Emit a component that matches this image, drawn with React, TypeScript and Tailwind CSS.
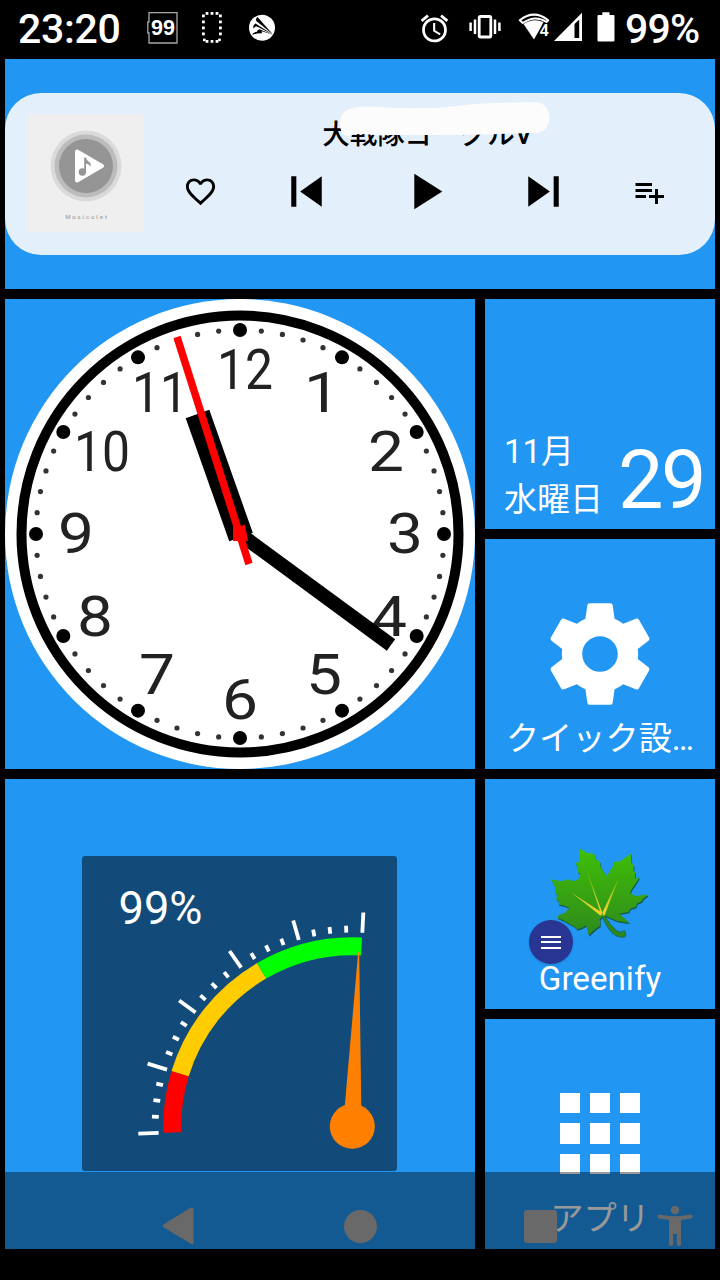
import type { ReactNode } from "react";
import {
  MdAlarm,
  MdFavoriteBorder,
  MdPlayArrow,
  MdPlaylistAdd,
  MdSkipNext,
  MdSkipPrevious,
} from "react-icons/md";

type Numeral = {
  label: string;
  x: number;
  y: number;
};

const numerals: Numeral[] = [
  { label: "12", x: 240, y: 90 },
  { label: "1", x: 317, y: 113 },
  { label: "2", x: 381, y: 172 },
  { label: "3", x: 400, y: 254 },
  { label: "4", x: 384, y: 337 },
  { label: "5", x: 319, y: 395 },
  { label: "6", x: 235, y: 420 },
  { label: "7", x: 152, y: 395 },
  { label: "8", x: 90, y: 337 },
  { label: "9", x: 71, y: 254 },
  { label: "10", x: 97, y: 172 },
  { label: "11", x: 155, y: 113 },
];

// point on a circle, angle in degrees, 0 = right, counter-clockwise
function polar(cx: number, cy: number, r: number, deg: number) {
  const a = (deg * Math.PI) / 180;
  return { x: cx + r * Math.cos(a), y: cy - r * Math.sin(a) };
}

function StatusBar() {
  return (
    <header className="flex h-[59px] items-center pb-[3px] pl-[18px] text-white">
      <span className="w-[106px] pt-[3px] text-[41px] font-medium leading-none tracking-[-0.3px]">23:20</span>

      {/* Notification icons */}
      <svg className="ml-[23px] h-8 w-8" viewBox="0 0 32 32">
        <path d="M2 0.5H30V31H2V21H.8V10H2Z" fill="none" stroke="#a8a8a8" strokeWidth="1.3" />
        <text x="16" y="23" textAnchor="middle" fontSize="21.500" fontWeight="700" fill="#fff" fontFamily="Liberation Sans, sans-serif">
          99
        </text>
      </svg>
      <svg className="ml-[23px] h-8 w-5" viewBox="0 0 20 32">
        <g fill="#fff">
          {[5, 10, 15].map((x) => (
            <g key={x}>
              <rect x={x - 1.4} y="0" width="2.8" height="2.8" />
              <rect x={x - 1.4} y="28" width="2.8" height="2.8" />
            </g>
          ))}
          {[3.5, 9.5, 15.5, 21.5].map((y) => (
            <g key={y}>
              <rect x="0" y={y - 1} width="2.8" height="2.8" />
              <rect x="17" y={y - 1} width="2.8" height="2.8" />
            </g>
          ))}
          <rect x="1" y="26.6" width="2.6" height="2.6" />
          <rect x="16.2" y="26.6" width="2.6" height="2.6" />
        </g>
      </svg>
      <svg className="ml-[26px] h-8 w-7" viewBox="0 0 28 32">
        <circle cx="14" cy="15.8" r="13" fill="#fff" />
        <path d="M25 22.5L9.500 5Q7.300 6.500 8 8.800Z" fill="#000" />
        <path d="M25 22.8L7.500 11.500Q4.500 13 5.500 16.500Q7 14 9.500 14.800Z" fill="#000" />
        <path d="M24.500 22.800L11.500 17.200Q9 18 9 19.800Q5 20 4 23Q9 20.800 14.500 21.200Q13 20 14 19.200Z" fill="#000" />
      </svg>

      {/* System icons */}
      <MdAlarm className="ml-[142px] size-[33px]" />
      <svg className="ml-[18px] h-8 w-8" viewBox="0 0 32 32">
        <rect x="10.2" y="4.5" width="11.6" height="20.5" rx="1.2" fill="none" stroke="#fff" strokeWidth="2.8" />
        <path d="M6 7.5V22M1.6 10.5V19M26 7.5V22M30.4 10.5V19" stroke="#fff" strokeWidth="2.5" />
      </svg>
      <svg className="ml-[17px] h-8 w-[33px]" viewBox="0 0 33 32">
        <path d="M4.800 11L1.800 8.200Q16 -3 30.200 8.200L28.500 10Q17 2.500 4.800 11Z" fill="none" stroke="#fff" strokeWidth="2" strokeLinejoin="round" />
        <path d="M5.500 12Q15 5.500 25.500 10L23 15L16 27.500Z" fill="#fff" />
        <text x="21.500" y="23.600" fontSize="16.500" fontWeight="600" fill="#fff" stroke="#000" strokeWidth="2" paintOrder="stroke">
          4
        </text>
      </svg>
      <svg className="ml-[3px] h-8 w-7" viewBox="0 0 28 32">
        <path d="M0 29L28 .8V29Z" fill="#fff" />
        <path d="M20.500 12L25.200 7.500V26H20.500Z" fill="#000" />
      </svg>
      <svg className="ml-[15px] h-8 w-[18px]" viewBox="0 0 18 32">
        <path d="M5.3 .3H12.5V3H16.5Q17.5 3 17.5 4V28.3Q17.5 29.5 16.3 29.5H1.6Q.5 29.5 .5 28.3V4Q.5 3 1.5 3H5.3Z" fill="#fff" />
      </svg>
      <span className="ml-[10px] pt-[3px] text-[41px] font-medium leading-none tracking-[-0.8px]">99%</span>
    </header>
  );
}

function Tile({ children, className = "" }: { children: ReactNode; className?: string }) {
  return <section className={`overflow-hidden bg-[#2196f3] ${className}`}>{children}</section>;
}

function AlbumArt() {
  return (
    <div className="flex h-[118px] w-[116px] flex-col items-center bg-[#efefef] pt-4">
      <svg className="size-[72px]" viewBox="0 0 72 72">
        <circle cx="36" cy="36" r="35.5" fill="#dadada" />
        <circle cx="36" cy="36" r="31.5" fill="#bcbcbc" />
        <circle cx="36" cy="36" r="27" fill="#959595" />
        <path d="M27 21.5L52 36L27 50.5Z" fill="#fff" stroke="#fff" strokeWidth="4" strokeLinejoin="round" />
        <circle cx="32.4" cy="42" r="3.7" fill="#959595" />
        <path d="M34.2 42V27.5H36Q36.5 31 39.5 32.2Q41.5 33.4 40.3 36.6Q38.5 33.8 36 33.6V42Z" fill="#959595" />
      </svg>
      <p className="mt-[12px] pl-[2px] text-[6px] font-medium leading-none tracking-[1.9px] text-[#a4a4a4]">Musicolet</p>
    </div>
  );
}

function MusicWidget() {
  return (
    <Tile className="h-[230px] pt-[34px]">
      <div className="flex h-[162px] items-start rounded-[36px] bg-[#e3f0fb] pl-[23px] pt-[21px] text-black">
        <AlbumArt />
        <div className="ml-[39px] w-[486px]">
          <div className="relative h-[47px]">
            <p className="pl-[3px] pt-[3px] text-center text-[27.5px] font-medium leading-9">大戦隊ゴーグルV</p>
            <svg className="absolute -top-[14px] left-[155px] h-[38px] w-[214px]" viewBox="0 0 214 38">
              <path
                d="M2 23C2 12 9 9 20 7C44 6 55 9 80 8C110 9 130 3 160 3L197 2C216 3 216 31 199 33C172 33 153 35 125 35H50C38 37 22 31 12 36C5 37 2 31 2 23Z"
                fill="#fcfcfc"
              />
            </svg>
          </div>
          <div className="flex items-center gap-[57.5px]">
            <MdFavoriteBorder className="size-[35px] shrink-0" />
            <MdSkipPrevious className="size-[61px] shrink-0" />
            <MdPlayArrow className="size-[61px] shrink-0" />
            <MdSkipNext className="size-[61px] shrink-0" />
            <MdPlaylistAdd className="size-9 shrink-0" />
          </div>
        </div>
      </div>
    </Tile>
  );
}

function ClockWidget() {
  const dots = Array.from({ length: 60 }, (_, i) => i);
  return (
    <Tile className="size-[470px]">
      <svg className="size-full blur-[0.7px]" viewBox="0 0 470 470">
        <circle cx="235" cy="235" r="235" fill="#fff" />
        <circle cx="235" cy="235" r="218.5" fill="none" stroke="#000" strokeWidth="10" />
        {dots.map((i) => {
          const p = polar(235, 235, 204, i * 6);
          return <circle key={i} cx={p.x} cy={p.y} r={i % 5 === 0 ? 7 : 2.6} fill={i % 5 === 0 ? "#000" : "#333"} />;
        })}
        {numerals.map((n) => (
          <text
            key={n.label}
            x={n.x}
            y={n.y}
            textAnchor="middle"
            fontSize="55"
            fill="#222"
            textLength={n.label.length === 1 ? 36 : 56}
            lengthAdjust="spacingAndGlyphs"
          >
            {n.label}
          </text>
        ))}
        <path d="M236 238L192.500 115" stroke="#000" strokeWidth="25" />
        <path d="M235 235L386 346" stroke="#000" strokeWidth="14" />
        <path d="M172 38L244 265" stroke="#f00" strokeWidth="7.500" />
        <path d="M228 228L240 226L243 242H228Z" fill="#f00" />
      </svg>
    </Tile>
  );
}

function DateTile() {
  return (
    <Tile className="flex h-[230px] items-end justify-between pb-[5px] pl-[19px] pr-[11px] text-white">
      <div className="text-[33px] leading-[48px]">
        <p>11月</p>
        <p>水曜日</p>
      </div>
      <p className="pb-[4px] text-[81px] leading-[78px] tracking-[-2.5px]">29</p>
    </Tile>
  );
}

function AppTile({ label, children }: { label: string; children: ReactNode }) {
  return (
    <Tile className="relative flex h-[230px] flex-col items-center justify-end pb-[6px] text-white">
      {children}
      <p className="text-[33.2px] leading-[48px]">{label}</p>
    </Tile>
  );
}

function GearIcon() {
  return (
    <svg className="size-[122px]" viewBox="0 0 24 24" fill="currentColor">
      <path d="M19.43 12.98c.04-.32.07-.64.07-.98s-.03-.66-.07-.98l2.11-1.65c.19-.15.24-.42.12-.64l-2-3.46c-.12-.22-.39-.3-.61-.22l-2.49 1c-.52-.4-1.08-.73-1.69-.98l-.38-2.65C14.46 2.18 14.25 2 14 2h-4c-.25 0-.46.18-.49.42l-.38 2.65c-.61.25-1.17.59-1.69.98l-2.49-1c-.23-.09-.49 0-.61.22l-2 3.46c-.13.22-.07.49.12.64l2.11 1.65c-.04.32-.07.65-.07.98s.03.66.07.98l-2.11 1.65c-.19.15-.24.42-.12.64l2 3.46c.12.22.39.3.61.22l2.49-1c.52.4 1.08.73 1.69.98l.38 2.65c.03.24.24.42.49.42h4c.25 0 .46-.18.49-.42l.38-2.65c.61-.25 1.17-.59 1.69-.98l2.49 1c.23.09.49 0 .61-.22l2-3.46c.12-.22.07-.49-.12-.64l-2.11-1.65zM12 15.500c-1.930 0-3.500-1.570-3.500-3.500s1.570-3.500 3.500-3.500 3.500 1.570 3.500 3.500-1.570 3.500-3.500 3.500z" />
    </svg>
  );
}

const leafPath =
  "M290 30L310 42L332 45L338 62L350 70L352 85L370 112L388 85L392 70L410 68L443 45L445 75L452 80L450 98L456 100L456 120L468 115L460 130L443 155L440 165L460 172L495 167L478 182L475 188L460 195L458 205L440 210L436 220L408 225L425 240L438 252L405 248L362 230L350 240L350 262L335 272L316 290L313 275L308 260L295 268L282 272L270 262L240 245L222 238L226 230L245 222L258 208L240 200L225 197L228 190L218 180L222 170L215 160L218 150L204 122L235 128L255 122L270 128L285 122L292 105L283 100L284 85L275 72L288 70L290 50Z";

function LeafIcon() {
  return (
    <svg className="mb-[16px] mr-[2px] h-[91px] w-[99px]" viewBox="200 28 297 273">
      <defs>
        <linearGradient id="leaf" x1="0" y1="0" x2="0" y2="1">
          <stop offset="0" stopColor="#3fbf06" />
          <stop offset="1" stopColor="#2f8a1c" />
        </linearGradient>
        <linearGradient id="vein" x1="0" y1="0" x2="0" y2="1">
          <stop offset="0" stopColor="#7bc21a" />
          <stop offset="1" stopColor="#f2d32c" />
        </linearGradient>
      </defs>
      <path d={leafPath} fill="#135a4c" transform="translate(2 4)" />
      <path d="M356 228Q366 262 388 284Q406 300 426 294Q430 286 424 276Q412 284 400 276Q378 258 364 230Z" fill="#2b8720" stroke="#135a4c" strokeWidth="2" />
      <path d={leafPath} fill="url(#leaf)" />
      <path d="M360 230L308 90L350 218L262 160L350 230ZM354 228L405 120L364 230Z" fill="url(#vein)" />
    </svg>
  );
}

function MenuBadge() {
  return (
    <div className="absolute left-11 top-[141px] flex size-11 flex-col items-center justify-center gap-[3.5px] rounded-full bg-[#283593] shadow-sm">
      <span className="h-[2px] w-5 bg-white" />
      <span className="h-[2px] w-5 bg-white" />
      <span className="h-[2px] w-5 bg-white" />
    </div>
  );
}

function AppsIcon() {
  return (
    <div className="mb-[21px] grid grid-cols-3 gap-[10px]">
      {Array.from({ length: 9 }, (_, i) => (
        <span key={i} className="size-[20.3px] bg-white" />
      ))}
    </div>
  );
}

const START = 181.9;
const SWEEP = 94.8;
const C = 270.5;

function arc(from: number, to: number) {
  const a = polar(C, C, 180.3, START - (SWEEP * from) / 100);
  const b = polar(C, C, 180.3, START - (SWEEP * to) / 100);
  return `M${a.x} ${a.y}A180.3 180.3 0 0 1 ${b.x} ${b.y}`;
}

function BatteryGauge() {
  const ticks = Array.from({ length: 21 }, (_, i) => i);
  return (
    <Tile className="flex size-[470px] items-center justify-center pb-[2px] pr-px">
      <svg className="size-[315px] rounded-[3px] bg-[#124b79]" viewBox="0 0 315 315">
        <text x="36.500" y="67.500" fontSize="46" fill="#fff" textLength="84" lengthAdjust="spacingAndGlyphs">
          99%
        </text>
        {ticks.map((i) => {
          const deg = START - (SWEEP * i) / 20;
          const a = polar(C, C, 194, deg);
          const b = polar(C, C, i % 4 === 0 ? 214.3 : 200.8, deg);
          return <line key={i} x1={a.x} y1={a.y} x2={b.x} y2={b.y} stroke="#fff" strokeWidth="3.800" />;
        })}
        <g fill="none" strokeWidth="18">
          <path d={arc(0, 20)} stroke="#ff0000" />
          <path d={arc(20, 65)} stroke="#ffcc00" />
          <path d={arc(65, 100)} stroke="#00ff00" />
        </g>
        <path d="M276.200 96L277.200 96L279.300 252H262.600Z" fill="#ff8000" />
        <circle cx="270.300" cy="270.300" r="22.500" fill="#ff8000" />
      </svg>
    </Tile>
  );
}

function NavBar() {
  return (
    <nav className="absolute inset-x-0 bottom-0 flex h-[108px] items-center bg-black/40 pl-[162px] text-[#696969]">
      <svg className="h-10 w-8" viewBox="0 0 32 40" fill="currentColor">
        <path d="M1.500 18.500L28.500 1.700Q31.500 .8 31.500 3.500V36Q31.500 39 28.500 37.600L1.500 21.200Q0 19.800 1.500 18.500Z" />
      </svg>
      <span className="ml-[150px] size-[33px] rounded-full bg-[#696969]" />
      <span className="ml-[147px] size-[33px] rounded-[3px] bg-[#696969]" />
      <svg className="ml-[100px] h-10 w-[36px]" viewBox="0 0 36 40" fill="currentColor">
        <circle cx="18" cy="4" r="4.200" />
        <path d="M2 8.500Q18 12 34 8.500Q36 9 35.500 11Q35 12.300 33.500 12.600L24 14V38Q24 40 21.800 40Q19.800 40 19.800 38V28H16.200V38Q16.200 40 14.200 40Q12 40 12 38V14L2.500 12.600Q1 12.300 .5 11Q0 9 2 8.500Z" />
      </svg>
    </nav>
  );
}

export default function App() {
  return (
    <div className="relative h-[1280px] w-[720px] overflow-hidden bg-black font-[Roboto,'Noto_Sans_CJK_JP',sans-serif]">
      <StatusBar />
      <main className="grid grid-cols-[470px_230px] gap-[10px] px-[5px]">
        <div className="col-span-2">
          <MusicWidget />
        </div>
        <ClockWidget />
        <div className="flex flex-col gap-[10px]">
          <DateTile />
          <AppTile label="クイック設…">
            <GearIcon />
          </AppTile>
        </div>
        <BatteryGauge />
        <div className="flex flex-col gap-[10px]">
          <AppTile label="Greenify">
            <LeafIcon />
            <MenuBadge />
          </AppTile>
          <AppTile label="アプリ">
            <AppsIcon />
          </AppTile>
        </div>
      </main>
      <NavBar />
    </div>
  );
}
